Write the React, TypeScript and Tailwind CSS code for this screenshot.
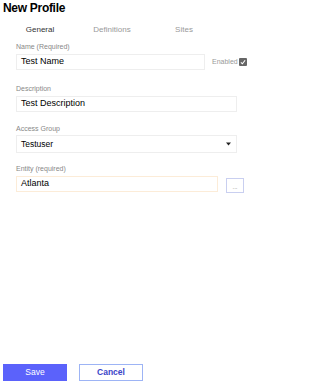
import React from "react";

export default function App() {
  return (
    <div className="flex flex-col w-[255px] h-[386px] bg-white overflow-hidden" style={{ fontFamily: '"Liberation Sans", Arial, sans-serif' }}>
      <div className="pl-[3px] pt-[1px] text-[12px] tracking-[-0.3px] font-bold text-black leading-[15px]">New Profile</div>
      <div className="flex pl-[4px] mt-[8px] h-[12px] text-[8px] leading-[12px]">
        <div className="w-[72px] text-center text-[#333]">General</div>
        <div className="w-[72px] text-center text-[#999]">Definitions</div>
        <div className="w-[72px] text-center text-[#999]">Sites</div>
      </div>
      <div className="pl-[16px]">
        <div className="mt-[7px] text-[7px] leading-[8px] text-[#888]">Name (Required)</div>
        <div className="flex items-center mt-[3px]">
          <div className="w-[189px] h-[16px] border border-[#eee] flex items-center pl-[4px] text-[9px] text-black">Test Name</div>
          <div className="ml-[7px] text-[7px] text-[#999]">Enabled</div>
          <div className="ml-[1px] w-[8px] h-[8px] bg-[#666] rounded-[1px] flex items-center justify-center">
            <svg width="6" height="6" viewBox="0 0 10 10"><path d="M1.5 5.5 L4 8 L8.5 2" stroke="white" strokeWidth="1.8" fill="none" /></svg>
          </div>
        </div>
        <div className="mt-[15px] text-[7px] leading-[8px] text-[#888]">Description</div>
        <div className="mt-[3px] w-[221px] h-[16px] border border-[#eee] flex items-center pl-[4px] text-[9px] text-black">Test Description</div>
        <div className="mt-[13px] text-[7px] leading-[8px] text-[#888]">Access Group</div>
        <div className="mt-[2px] w-[221px] h-[18px] border border-[#eee] flex items-center justify-between pl-[4px] pr-[5px] text-[8.5px] text-black">
          <span>Testuser</span>
          <svg width="5" height="4" viewBox="0 0 5 4"><path d="M0 0.5 L5 0.5 L2.5 3.5 Z" fill="#222" /></svg>
        </div>
        <div className="mt-[12px] text-[7px] leading-[8px] text-[#888]">Entity (required)</div>
        <div className="flex items-start mt-[3px]">
          <div className="w-[202px] h-[16px] border border-[#fcecd8] flex items-center pl-[4px] text-[9px] text-black">Atlanta</div>
          <div className="ml-[8px] mt-[2px] w-[18px] h-[15px] border border-[#c9cff0] flex items-end justify-center pb-[2px] text-[6px] leading-[6px] text-[#777]">...</div>
        </div>
      </div>
      <div className="mt-auto mb-[5px] pl-[3px] flex gap-[12px]">
        <div className="w-[64px] h-[17px] bg-[#5b62fb] text-white text-[8.5px] flex items-center justify-center">Save</div>
        <div className="w-[64px] h-[17px] border border-[#9db4f5] text-[#3b45c8] text-[8.5px] font-bold flex items-center justify-center">Cancel</div>
      </div>
    </div>
  );
}
